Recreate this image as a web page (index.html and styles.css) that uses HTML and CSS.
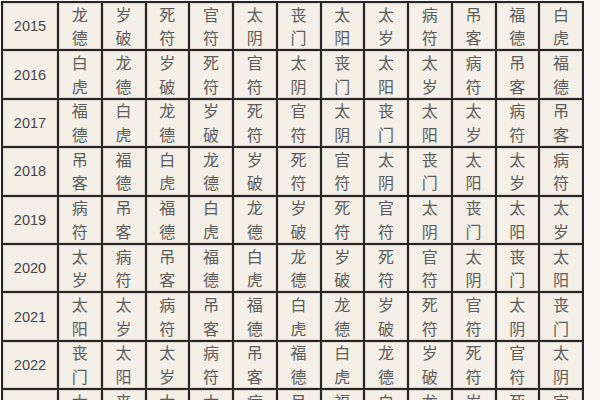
FILE: index.html
```html
<!DOCTYPE html>
<html lang="zh">
<head>
<meta charset="utf-8">
<link rel="stylesheet" href="styles.css">
</head>
<body>
<div class="grid">
  <div class="year">2015</div>
  <div class="c">龙<br>德</div><div class="c">岁<br>破</div><div class="c">死<br>符</div><div class="c">官<br>符</div><div class="c">太<br>阴</div><div class="c">丧<br>门</div><div class="c">太<br>阳</div><div class="c">太<br>岁</div><div class="c">病<br>符</div><div class="c">吊<br>客</div><div class="c">福<br>德</div><div class="c">白<br>虎</div>
  <div class="year">2016</div>
  <div class="c">白<br>虎</div><div class="c">龙<br>德</div><div class="c">岁<br>破</div><div class="c">死<br>符</div><div class="c">官<br>符</div><div class="c">太<br>阴</div><div class="c">丧<br>门</div><div class="c">太<br>阳</div><div class="c">太<br>岁</div><div class="c">病<br>符</div><div class="c">吊<br>客</div><div class="c">福<br>德</div>
  <div class="year">2017</div>
  <div class="c">福<br>德</div><div class="c">白<br>虎</div><div class="c">龙<br>德</div><div class="c">岁<br>破</div><div class="c">死<br>符</div><div class="c">官<br>符</div><div class="c">太<br>阴</div><div class="c">丧<br>门</div><div class="c">太<br>阳</div><div class="c">太<br>岁</div><div class="c">病<br>符</div><div class="c">吊<br>客</div>
  <div class="year">2018</div>
  <div class="c">吊<br>客</div><div class="c">福<br>德</div><div class="c">白<br>虎</div><div class="c">龙<br>德</div><div class="c">岁<br>破</div><div class="c">死<br>符</div><div class="c">官<br>符</div><div class="c">太<br>阴</div><div class="c">丧<br>门</div><div class="c">太<br>阳</div><div class="c">太<br>岁</div><div class="c">病<br>符</div>
  <div class="year">2019</div>
  <div class="c">病<br>符</div><div class="c">吊<br>客</div><div class="c">福<br>德</div><div class="c">白<br>虎</div><div class="c">龙<br>德</div><div class="c">岁<br>破</div><div class="c">死<br>符</div><div class="c">官<br>符</div><div class="c">太<br>阴</div><div class="c">丧<br>门</div><div class="c">太<br>阳</div><div class="c">太<br>岁</div>
  <div class="year">2020</div>
  <div class="c">太<br>岁</div><div class="c">病<br>符</div><div class="c">吊<br>客</div><div class="c">福<br>德</div><div class="c">白<br>虎</div><div class="c">龙<br>德</div><div class="c">岁<br>破</div><div class="c">死<br>符</div><div class="c">官<br>符</div><div class="c">太<br>阴</div><div class="c">丧<br>门</div><div class="c">太<br>阳</div>
  <div class="year">2021</div>
  <div class="c">太<br>阳</div><div class="c">太<br>岁</div><div class="c">病<br>符</div><div class="c">吊<br>客</div><div class="c">福<br>德</div><div class="c">白<br>虎</div><div class="c">龙<br>德</div><div class="c">岁<br>破</div><div class="c">死<br>符</div><div class="c">官<br>符</div><div class="c">太<br>阴</div><div class="c">丧<br>门</div>
  <div class="year">2022</div>
  <div class="c">丧<br>门</div><div class="c">太<br>阳</div><div class="c">太<br>岁</div><div class="c">病<br>符</div><div class="c">吊<br>客</div><div class="c">福<br>德</div><div class="c">白<br>虎</div><div class="c">龙<br>德</div><div class="c">岁<br>破</div><div class="c">死<br>符</div><div class="c">官<br>符</div><div class="c">太<br>阴</div>
  <div class="year">2023</div>
  <div class="c">太<br>阴</div><div class="c">丧<br>门</div><div class="c">太<br>阳</div><div class="c">太<br>岁</div><div class="c">病<br>符</div><div class="c">吊<br>客</div><div class="c">福<br>德</div><div class="c">白<br>虎</div><div class="c">龙<br>德</div><div class="c">岁<br>破</div><div class="c">死<br>符</div><div class="c">官<br>符</div>
</div>
</body>
</html>
```
FILE: styles.css
```css
html, body {
  margin: 0;
  padding: 0;
  background: #f9f7f3;
  overflow: hidden;
  height: 400px;
}
.grid {
  margin: 1px 0 0 1px;
  width: 583px;
  box-sizing: border-box;
  display: grid;
  grid-template-columns: 54px repeat(12, 1fr);
  grid-auto-rows: 46.4px;
  gap: 2px;
  padding: 2px;
  background: #262626;
}
.grid > div {
  background: #f4f0e8;
  box-shadow: inset 0 0 0 1px #ddd8ce;
  display: flex;
  align-items: center;
  justify-content: center;
  text-align: center;
}
.year {
  font-family: "Liberation Sans", Arial, sans-serif;
  font-size: 14.5px;
  color: #454545;
}
.c {
  font-family: "Noto Sans CJK SC", sans-serif;
  font-size: 16px;
  line-height: 23.5px;
  color: #5c5c5c;
}
```
